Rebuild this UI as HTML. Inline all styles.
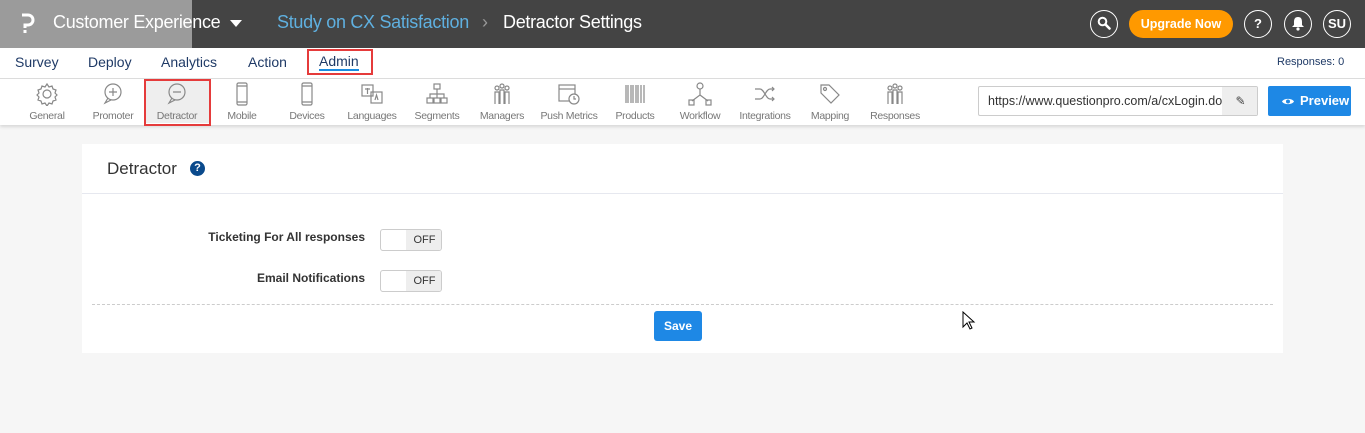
<!DOCTYPE html>
<html><head><meta charset="utf-8"><style>
*{margin:0;padding:0;box-sizing:border-box}
body{width:1365px;height:433px;overflow:hidden;background:#f6f6f6;font-family:"Liberation Sans",sans-serif;position:relative}
.abs{position:absolute}
.top{left:0;top:0;width:1365px;height:48px;background:#444}
.lft{left:0;top:0;width:192px;height:48px;background:#9b9b9b}
.nav{left:0;top:48px;width:1365px;height:31px;background:#fff;border-bottom:1px solid #ddd}
.nav span{position:absolute;top:6px;font-size:14px;color:#1f3a66}
.tb{left:0;top:79px;width:1365px;height:46px;background:#fff;box-shadow:0 2px 3px rgba(0,0,0,.12)}
.it{position:absolute;top:0;width:64px;margin-left:-32px;text-align:center}
.it svg{display:block;margin:3px auto 0;width:24px;height:24px}
.it b{display:block;font-weight:normal;font-size:10.5px;color:#777;margin-top:4px;letter-spacing:-.3px}
.circ{width:28px;height:28px;border:1.5px solid #fff;border-radius:50%;color:#fff;font-weight:bold;font-size:13px;text-align:center;line-height:25px;top:10px}
.circ svg{display:block;margin:5px auto 0}
</style></head><body>
<div class="abs top"></div>
<div class="abs lft"></div>
<svg class="abs" style="left:20px;top:13px" width="16" height="22" viewBox="0 0 16 22"><path d="M2 2h6a5 5 0 0 1 0 10H5v3" fill="none" stroke="#fff" stroke-width="3"/><rect x="3.5" y="17" width="3" height="3" fill="#fff"/></svg>
<div class="abs" style="left:53px;top:12px;color:#fff;font-size:18px;letter-spacing:-.3px">Customer Experience</div>
<div class="abs" style="left:230px;top:20px;width:0;height:0;border-left:6px solid transparent;border-right:6px solid transparent;border-top:7px solid #fff"></div>
<div class="abs" style="left:277px;top:12px;color:#5fb0e0;font-size:18px;letter-spacing:-.3px">Study on CX Satisfaction</div>
<div class="abs" style="left:482px;top:12px;color:#999;font-size:18px">›</div>
<div class="abs" style="left:503px;top:12px;color:#fff;font-size:18px;letter-spacing:-.3px">Detractor Settings</div>
<div class="abs circ" style="left:1090px"><svg width="14" height="14" viewBox="0 0 14 14"><circle cx="5.5" cy="5.5" r="3.8" fill="none" stroke="#fff" stroke-width="2"/><path d="M8.5 8.5l4 4" stroke="#fff" stroke-width="2.6" stroke-linecap="round"/></svg></div>
<div class="abs" style="left:1129px;top:10px;width:104px;height:28px;background:#f90;border-radius:14px;color:#fff;font-size:12.5px;font-weight:bold;text-align:center;line-height:28px">Upgrade Now</div>
<div class="abs circ" style="left:1244px">?</div>
<div class="abs circ" style="left:1284px"><svg width="14" height="15" viewBox="0 0 14 15"><path d="M7 1c-3 0-4 2-4 5v3l-2 2h12l-2-2V6c0-3-1-5-4-5z" fill="#fff"/><circle cx="7" cy="13" r="1.6" fill="#fff"/></svg></div>
<div class="abs circ" style="left:1323px">SU</div>
<div class="abs nav">
<span style="left:15px">Survey</span><span style="left:88px">Deploy</span><span style="left:161px">Analytics</span><span style="left:248px">Action</span>
<span style="left:319px;border-bottom:2px solid #1a8be0;line-height:15px">Admin</span>
<span style="left:1277px;top:8px;font-size:11px">Responses: 0</span>
</div>
<div class="abs" style="left:307px;top:49px;width:66px;height:26px;border:2px solid #e53b3b"></div>
<div class="abs tb">
<div class="it" style="left:47px"><svg viewBox="0 0 24 24" fill="none" stroke="#888" stroke-width="1.2"><circle cx="12" cy="12" r="4"/><path d="M12 2l2 3 3-1 1 3 3 1-1 3 2 2-2 2 1 3-3 1-1 3-3-1-2 3-2-3-3 1-1-3-3-1 1-3-2-2 2-2-1-3 3-1 1-3 3 1z"/></svg><b>General</b></div>
<div class="it" style="left:113px"><svg viewBox="0 0 24 24" fill="none" stroke="#888" stroke-width="1.2"><circle cx="12" cy="10" r="8"/><path d="M7 16l-3 5 6-3M12 6v8M8 10h8"/></svg><b>Promoter</b></div>
<div class="it" style="left:177px;background:#eee;height:44px"><svg viewBox="0 0 24 24" fill="none" stroke="#888" stroke-width="1.2"><circle cx="12" cy="10" r="8"/><path d="M7 16l-3 5 6-3M8 10h8"/></svg><b>Detractor</b></div>
<div class="it" style="left:242px"><svg viewBox="0 0 24 24" fill="none" stroke="#888" stroke-width="1.2"><rect x="7" y="1" width="10" height="22" rx="1.5"/><path d="M7 4h10M7 20h10"/></svg><b>Mobile</b></div>
<div class="it" style="left:307px"><svg viewBox="0 0 24 24" fill="none" stroke="#888" stroke-width="1.2"><rect x="7" y="1" width="10" height="22" rx="1.5"/><path d="M7 4h10M7 20h10"/></svg><b>Devices</b></div>
<div class="it" style="left:372px"><svg viewBox="0 0 24 24" fill="none" stroke="#888" stroke-width="1.2"><rect x="2" y="3" width="11" height="11"/><rect x="11" y="10" width="11" height="11"/><path d="M5 7h5M7.5 6v6M15 18l1.5-5 1.5 5"/></svg><b>Languages</b></div>
<div class="it" style="left:437px"><svg viewBox="0 0 24 24" fill="none" stroke="#888" stroke-width="1.2"><rect x="9" y="2" width="6" height="5"/><rect x="2" y="16" width="6" height="5"/><rect x="9" y="16" width="6" height="5"/><rect x="16" y="16" width="6" height="5"/><path d="M12 7v9M5 16v-4h14v4"/></svg><b>Segments</b></div>
<div class="it" style="left:502px"><svg viewBox="0 0 24 24" fill="none" stroke="#888" stroke-width="1.2"><circle cx="7" cy="6" r="2"/><circle cx="12" cy="4" r="2"/><circle cx="17" cy="6" r="2"/><path d="M5 22V10h4v12M10 22V8h4v14M15 22V10h4v12"/></svg><b>Managers</b></div>
<div class="it" style="left:569px;width:70px;margin-left:-35px"><svg viewBox="0 0 24 24" fill="none" stroke="#888" stroke-width="1.2"><rect x="2" y="3" width="16" height="16"/><path d="M2 7h16"/><circle cx="17" cy="17" r="5" fill="#fff"/><path d="M17 14v3h2"/></svg><b>Push Metrics</b></div>
<div class="it" style="left:635px"><svg viewBox="0 0 24 24" fill="none" stroke="#888" stroke-width="1.2"><path d="M3 3v18M5 3v18M8 3v18M10 3v18M13 3v18M15 3v18M18 3v18M21 3v18"/></svg><b>Products</b></div>
<div class="it" style="left:700px"><svg viewBox="0 0 24 24" fill="none" stroke="#888" stroke-width="1.2"><circle cx="12" cy="4" r="3"/><path d="M12 7v6L4 19M12 13l8 6"/><rect x="1" y="18" width="5" height="5"/><rect x="18" y="18" width="5" height="5"/></svg><b>Workflow</b></div>
<div class="it" style="left:765px"><svg viewBox="0 0 24 24" fill="none" stroke="#888" stroke-width="1.2"><path d="M2 7h5c4 0 6 10 10 10h4M2 17h5c4 0 6-10 10-10h4M19 5l2 2-2 2M19 15l2 2-2 2"/></svg><b>Integrations</b></div>
<div class="it" style="left:830px"><svg viewBox="0 0 24 24" fill="none" stroke="#888" stroke-width="1.2"><path d="M3 3h8l10 10-8 8L3 11z"/><circle cx="7" cy="7" r="1.5"/></svg><b>Mapping</b></div>
<div class="it" style="left:895px"><svg viewBox="0 0 24 24" fill="none" stroke="#888" stroke-width="1.2"><circle cx="7" cy="6" r="2"/><circle cx="12" cy="4" r="2"/><circle cx="17" cy="6" r="2"/><path d="M5 22V10h4v12M10 22V8h4v14M15 22V10h4v12"/></svg><b>Responses</b></div>
<div class="abs" style="left:978px;top:7px;width:280px;height:30px;border:1px solid #ccc;border-radius:2px;background:#fff;overflow:hidden">
<div class="abs" style="left:9px;top:7px;font-size:12.5px;color:#333;white-space:nowrap;width:235px;overflow:hidden">https://www.questionpro.com/a/cxLogin.do</div>
<div class="abs" style="left:243px;top:0;width:37px;height:30px;background:#eee;color:#444;font-size:12px;text-align:center;line-height:28px">✎</div>
</div>
<div class="abs" style="left:1268px;top:7px;width:83px;height:30px;background:#1e88e5;border-radius:2px;color:#fff;font-size:13px;font-weight:bold;line-height:30px;padding-left:32px">Preview</div>
<svg class="abs" style="left:1281px;top:18px" width="14" height="9" viewBox="0 0 14 9"><path d="M1 4.5C3 1 11 1 13 4.5 11 8 3 8 1 4.5z" fill="#fff"/><circle cx="7" cy="4.5" r="2" fill="#1e88e5"/></svg>
</div>
<div class="abs" style="left:144px;top:79px;width:67px;height:47px;border:2px solid #e53b3b"></div>
<div class="abs" style="left:82px;top:144px;width:1201px;height:209px;background:#fff"></div>
<div class="abs" style="left:82px;top:193px;width:1201px;height:1px;background:#e6e8ef"></div>
<div class="abs" style="left:107px;top:159px;font-size:17px;color:#333">Detractor</div>
<div class="abs" style="left:190px;top:161px;width:15px;height:15px;border-radius:50%;background:#0a4a8c;color:#fff;font-size:11px;font-weight:bold;text-align:center;line-height:15px">?</div>
<div class="abs" style="left:150px;top:230px;width:215px;text-align:right;font-size:12px;font-weight:bold;color:#333">Ticketing For All responses</div>
<div class="abs" style="left:150px;top:271px;width:215px;text-align:right;font-size:12px;font-weight:bold;color:#333">Email Notifications</div>
<div class="abs" style="left:380px;top:229px;width:62px;height:22px;border:1px solid #ccc;border-radius:3px;background:#fff;overflow:hidden"><div class="abs" style="left:25px;top:0;width:37px;height:22px;background:#eee;font-size:11px;color:#333;text-align:center;line-height:21px">OFF</div></div>
<div class="abs" style="left:380px;top:270px;width:62px;height:22px;border:1px solid #ccc;border-radius:3px;background:#fff;overflow:hidden"><div class="abs" style="left:25px;top:0;width:37px;height:22px;background:#eee;font-size:11px;color:#333;text-align:center;line-height:21px">OFF</div></div>
<div class="abs" style="left:92px;top:304px;width:1181px;border-top:1px dashed #ccc"></div>
<div class="abs" style="left:654px;top:311px;width:48px;height:30px;background:#1e88e5;border-radius:3px;color:#fff;font-size:12px;font-weight:bold;text-align:center;line-height:30px">Save</div>
<svg class="abs" style="left:962px;top:311px" width="14" height="20" viewBox="0 0 14 20"><path d="M1 1v15l4-4 3 6 2-1-3-6h5z" fill="#fff" stroke="#000"/></svg>
</body></html>
